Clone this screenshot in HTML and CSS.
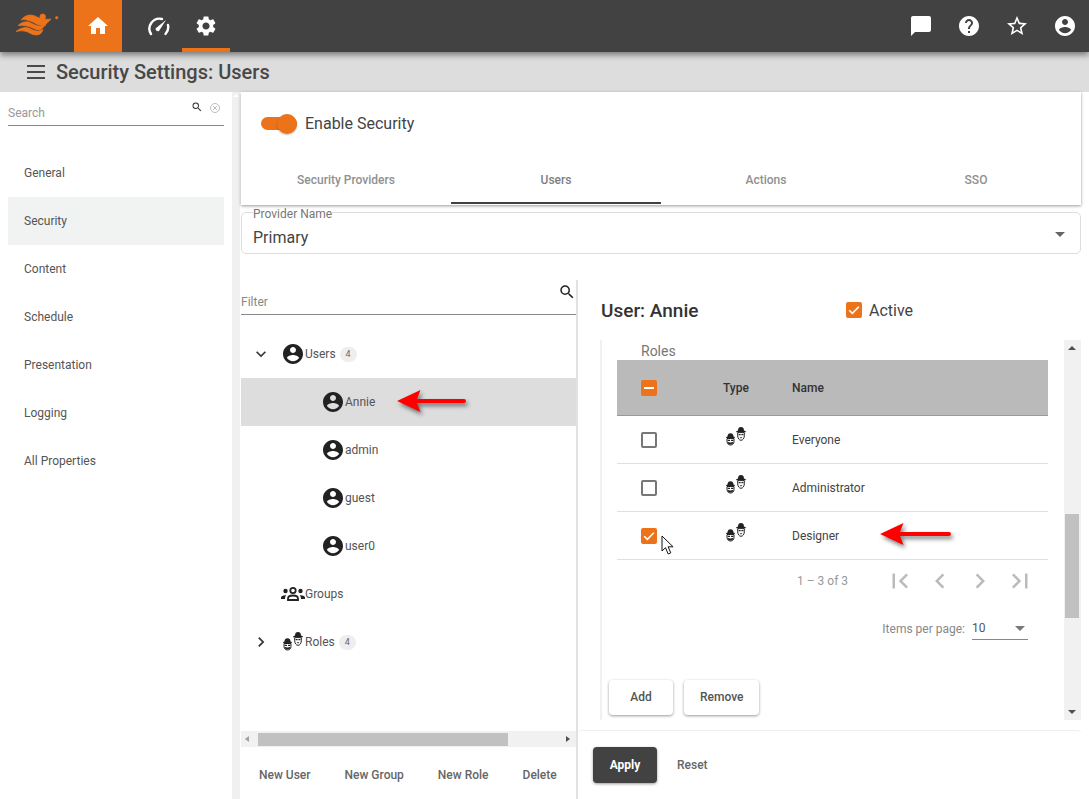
FILE: index.html
```html
<!DOCTYPE html>
<html lang="en">
<head>
  <meta charset="UTF-8" />
  <meta name="viewport" content="width=device-width, initial-scale=1.0" />
  <title>Security Settings: Users</title>
  <link rel="stylesheet" href="styles.css">
</head>
<body>
  <svg class="sprite" aria-hidden="true">
    <symbol id="i-user" viewBox="0 0 24 24"><path d="M12 2C6.48 2 2 6.48 2 12s4.48 10 10 10 10-4.48 10-10S17.52 2 12 2zm0 3c1.66 0 3 1.34 3 3s-1.34 3-3 3-3-1.34-3-3 1.34-3 3-3zm0 14.2c-2.5 0-4.71-1.28-6-3.22.03-1.99 4-3.08 6-3.08 1.99 0 5.97 1.09 6 3.08-1.29 1.94-3.5 3.22-6 3.22z"/></symbol>
    <symbol id="i-roles" viewBox="0 0 24 24">
      <!-- back figure -->
      <path d="M14 5.600C14 3 15.200 2 17 2s3 1 3 3.600l1.800.6v1H12.200v-1z" fill="#222"/>
      <path d="M13.700 7.600h6.600v3.200c0 2.500-1.500 4.500-3.300 4.500s-3.300-2-3.300-4.500z" fill="#fff" stroke="#222" stroke-width="1"/>
      <path d="M14.600 9h2v1.300h-2zM17.400 9h2v1.300h-2z" fill="#222"/>
      <path d="M15.500 12.300h3l-1.500 1.300z" fill="#222"/>
      <!-- front figure -->
      <path d="M3.500 11.500C3.500 9.300 4.700 8.300 6.500 8.300s3 1 3 3.200l1.300.5v.9H2.200V12z" fill="#222"/>
      <path d="M3 13.500h7v2.800c0 2.300-1.600 3.700-3.500 3.700S3 18.600 3 16.300z" fill="#fff" stroke="#222" stroke-width="1"/>
      <path d="M3.700 14.700h2.300v1.200H3.700zM7 14.700h2.300v1.200H7z" fill="#222"/>
      <path d="M3.600 16.800c1.800.9 4 .9 5.800 0 0 1.700-1.300 2.700-2.900 2.700s-2.900-1-2.900-2.700z" fill="#222"/>
    </symbol>
    <symbol id="i-first" viewBox="0 0 24 24"><path d="M18.410 16.590L13.820 12l4.590-4.590L17 6l-6 6 6 6zM6 6h2v12H6z"/></symbol>
    <symbol id="i-prev" viewBox="0 0 24 24"><path d="M15.410 7.410L14 6l-6 6 6 6 1.410-1.410L10.830 12z"/></symbol>
    <symbol id="i-next" viewBox="0 0 24 24"><path d="M10 6L8.590 7.410 13.170 12l-4.580 4.590L10 18l6-6z"/></symbol>
    <symbol id="i-last" viewBox="0 0 24 24"><path d="M5.590 7.410L10.180 12l-4.590 4.590L7 18l6-6-6-6zM16 6h2v12h-2z"/></symbol>
    <symbol id="i-search" viewBox="0 0 24 24"><path d="M15.500 14h-.79l-.28-.27A6.470 6.470 0 0 0 16 9.500 6.500 6.500 0 1 0 9.500 16c1.610 0 3.090-.59 4.230-1.570l.27.28v.79l5 4.990L20.490 19l-4.990-5zm-6 0C7.010 14 5 11.990 5 9.500S7.010 5 9.500 5 14 7.010 14 9.500 11.990 14 9.500 14z"/></symbol>
  </svg>

  <header class="topbar">
    <div class="logo">
      <svg width="46" height="26" viewBox="0 0 46 26" fill="#ec7319" stroke="#ec7319" stroke-width="0.700">
        <path d="M7 8C11 3 16 2 21 4c4 2 8 4 16 3-2 3-5 4-6 7-7 0-11-4-15-5-3-1-6-2-9-1z"/>
        <path d="M4 13.500C9 9 14 9 18 11.500c4 2 8 3.500 12 2-1 3-3 4.500-5 4.500-4 0-8-3.500-12-4-3-.5-6-.5-9-.5z"/>
        <path d="M2 19.500c5-4 10-5 14-3 4 2 8 4 13 1-1 3.500-3 5.500-7 5.500-5 0-8-4-12-4-3-.5-5 0-8 .5z"/>
        <circle cx="28.700" cy="4.700" r="2.800"/>
        <circle cx="42.700" cy="5.700" r="1.200"/>
      </svg>
    </div>
    <a class="nav-tile nav-home">
      <svg width="24" height="24" viewBox="0 0 24 24" fill="#fff"><path d="M10 20v-6h4v6h5v-8h3L12 3 2 12h3v8z"/></svg>
    </a>
    <a class="nav-tile nav-gauge">
      <svg width="24" height="24" viewBox="0 0 24 24" fill="none" stroke="#fff" stroke-width="2.400" stroke-linecap="round">
        <path d="M5 20A10 10 0 0 1 16 5"/>
        <path d="M22 11a10 10 0 0 1-2.500 9"/>
        <path d="M9.500 14.500L20 6l-7 11a2.500 2.500 0 0 1-3.500-2.500z" fill="#fff" stroke="none"/>
      </svg>
    </a>
    <a class="nav-tile nav-active">
      <svg width="24" height="24" viewBox="0 0 24 24" fill="#fff"><path d="M19.140 12.940c.04-.3.06-.61.06-.94 0-.32-.02-.64-.07-.94l2.030-1.580c.18-.14.23-.41.12-.61l-1.920-3.320c-.12-.22-.37-.29-.59-.22l-2.390.96c-.5-.38-1.030-.7-1.620-.94l-.36-2.540c-.04-.24-.24-.41-.48-.41h-3.840c-.24 0-.43.17-.47.41l-.36 2.540c-.59.24-1.130.57-1.620.94l-2.390-.96c-.22-.08-.47 0-.59.22L2.740 8.870c-.12.21-.08.47.12.61l2.030 1.580c-.05.3-.09.63-.09.94s.02.64.07.94l-2.030 1.580c-.18.14-.23.41-.12.61l1.920 3.320c.12.22.37.29.59.22l2.390-.96c.5.38 1.030.7 1.620.94l.36 2.540c.05.24.24.41.48.41h3.840c.24 0 .44-.17.47-.41l.36-2.540c.59-.24 1.130-.56 1.620-.94l2.390.96c.22.08.47 0 .59-.22l1.920-3.320c.12-.22.07-.47-.12-.61l-2.010-1.580zM12 15.600c-1.980 0-3.600-1.620-3.600-3.600s1.620-3.600 3.600-3.600 3.600 1.620 3.600 3.600-1.620 3.600-3.600 3.600z"/></svg>
    </a>
    <div class="top-right">
      <a class="nav-tile"><svg width="24" height="24" viewBox="0 0 24 24" fill="#fff"><path d="M20 2H4c-1.100 0-2 .9-2 2v18l4-4h14c1.100 0 2-.9 2-2V4c0-1.100-.9-2-2-2z"/></svg></a>
      <a class="nav-tile"><svg width="24" height="24" viewBox="0 0 24 24" fill="#fff"><path d="M12 2C6.480 2 2 6.480 2 12s4.480 10 10 10 10-4.480 10-10S17.520 2 12 2zm1 17h-2v-2h2v2zm2.070-7.750l-.9.920C13.450 12.900 13 13.500 13 15h-2v-.5c0-1.100.45-2.100 1.170-2.830l1.240-1.260c.37-.36.59-.86.59-1.410 0-1.100-.9-2-2-2s-2 .9-2 2H8c0-2.210 1.790-4 4-4s4 1.790 4 4c0 .88-.36 1.680-.93 2.250z"/></svg></a>
      <a class="nav-tile"><svg width="24" height="24" viewBox="0 0 24 24" fill="#fff"><path d="M22 9.240l-7.190-.62L12 2 9.190 8.630 2 9.240l5.460 4.730L5.820 21 12 17.270 18.180 21l-1.630-7.030L22 9.240zM12 15.400l-3.760 2.270 1-4.280-3.320-2.880 4.380-.38L12 6.100l1.710 4.040 4.380.38-3.320 2.880 1 4.280L12 15.400z"/></svg></a>
      <a class="nav-tile"><svg width="24" height="24" fill="#fff"><use href="#i-user"/></svg></a>
    </div>
  </header>

  <div class="subbar">
    <div class="hamburger"><span></span><span></span><span></span></div>
    <h1>Security Settings: Users</h1>
  </div>

  <div class="content">
    <aside class="sidebar">
      <div class="side-search">
        <span>Search</span>
        <svg class="s-mag" width="12" height="12"><use href="#i-search"/></svg>
        <svg class="s-clear" width="12" height="12" viewBox="0 0 24 24" fill="none" stroke="#bbb" stroke-width="2"><circle cx="12" cy="12" r="9"/><path d="M8 8l8 8M16 8l-8 8"/></svg>
      </div>
      <nav class="side-nav">
        <a>General</a>
        <a class="current">Security</a>
        <a>Content</a>
        <a>Schedule</a>
        <a>Presentation</a>
        <a>Logging</a>
        <a>All Properties</a>
      </nav>
    </aside>
    <div class="side-strip"><b></b></div>

    <main class="main">
      <section class="card">
        <div class="toggle-row">
          <span class="toggle"><i></i></span>
          <span>Enable Security</span>
        </div>
        <div class="tabs">
          <a>Security Providers</a>
          <a class="on">Users</a>
          <a>Actions</a>
          <a>SSO</a>
        </div>
      </section>

      <fieldset class="provider">
        <legend>Provider Name</legend>
        <span>Primary</span>
        <b class="caret"></b>
      </fieldset>

      <div class="split">
        <section class="left">
          <div class="filter">
            <span>Filter</span>
            <svg width="18" height="18" fill="#222"><use href="#i-search"/></svg>
          </div>
          <div class="tree">
            <div class="tree-row">
              <span class="chev"><svg width="20" height="20" viewBox="0 0 24 24" fill="#333"><path d="M16.590 8.590L12 13.170 7.410 8.590 6 10l6 6 6-6z"/></svg></span>
              <svg class="t-icon" width="24" height="24"><use href="#i-user"/></svg>
              <span>Users</span><em class="count">4</em>
            </div>
            <div class="tree-row child selected">
              <svg class="t-icon" width="24" height="24"><use href="#i-user"/></svg>
              <span>Annie</span>
              <svg class="arrow" width="72" height="26" viewBox="0 0 72 26"><path d="M1 12L24.500 1 21 10h47a2 2 0 0 1 0 4H21l3.500 9z"/></svg>
            </div>
            <div class="tree-row child">
              <svg class="t-icon" width="24" height="24"><use href="#i-user"/></svg>
              <span>admin</span>
            </div>
            <div class="tree-row child">
              <svg class="t-icon" width="24" height="24"><use href="#i-user"/></svg>
              <span>guest</span>
            </div>
            <div class="tree-row child">
              <svg class="t-icon" width="24" height="24"><use href="#i-user"/></svg>
              <span>user0</span>
            </div>
            <div class="tree-row">
              <span class="chev"></span>
              <svg class="t-icon" width="24" height="24" viewBox="0 0 24 24">
                <circle cx="12" cy="8.500" r="2.700" fill="none" stroke="currentColor" stroke-width="1.800"/>
                <circle cx="4.500" cy="9" r="2.200"/><circle cx="19.500" cy="9" r="2.200"/>
                <path d="M7 18v-1.500c0-2 2.500-3 5-3s5 1 5 3V18z" fill="none" stroke="currentColor" stroke-width="1.800"/>
                <path d="M0 17v-1.500c0-1.500 2-2.500 5.300-2.300-.8 1-1.300 2-1.300 3.800zM24 17v-1.500c0-1.500-2-2.500-5.300-2.300.8 1 1.300 2 1.300 3.800z"/>
              </svg>
              <span>Groups</span>
            </div>
            <div class="tree-row">
              <span class="chev"><svg width="20" height="20" viewBox="0 0 24 24" fill="#333"><path d="M10 6L8.590 7.410 13.170 12l-4.580 4.590L10 18l6-6z"/></svg></span>
              <svg class="t-icon" width="24" height="24"><use href="#i-roles"/></svg>
              <span>Roles</span><em class="count">4</em>
            </div>
          </div>
          <div class="hscroll">
            <b class="tri-l"></b>
            <div class="h-thumb"></div>
            <b class="tri-r"></b>
          </div>
          <div class="left-actions">
            <a>New User</a>
            <a>New Group</a>
            <a>New Role</a>
            <a>Delete</a>
          </div>
        </section>

        <section class="right">
          <div class="user-head">
            <h2>User: Annie</h2>
            <label class="active-check">
              <span class="check checked"><svg width="16" height="16" viewBox="0 0 16 16" fill="none" stroke="#fff" stroke-width="1.600"><path d="M3.200 8.200l3.200 3.200 6.400-6.600"/></svg></span>
              Active
            </label>
          </div>

          <div class="scroller">
            <div class="scroll-body">
              <div class="roles-label">Roles</div>
              <table class="roles">
                <thead>
                  <tr>
                    <th class="c-check"><span class="check checked"><i class="dash"></i></span></th>
                    <th class="c-type">Type</th>
                    <th>Name</th>
                  </tr>
                </thead>
                <tbody>
                  <tr>
                    <td class="c-check"><span class="check"></span></td>
                    <td class="c-type"><svg width="24" height="24"><use href="#i-roles"/></svg></td>
                    <td>Everyone</td>
                  </tr>
                  <tr>
                    <td class="c-check"><span class="check"></span></td>
                    <td class="c-type"><svg width="24" height="24"><use href="#i-roles"/></svg></td>
                    <td>Administrator</td>
                  </tr>
                  <tr>
                    <td class="c-check">
                      <span class="check checked"><svg width="16" height="16" viewBox="0 0 16 16" fill="none" stroke="#fff" stroke-width="1.600"><path d="M3.200 8.200l3.200 3.200 6.400-6.600"/></svg></span>
                      <svg class="pointer" width="14" height="21" viewBox="0 0 14 21"><path d="M1 1v15l3.500-3.300 2.700 6.300 2.600-1.100-2.700-6.100h5z" fill="#fff" stroke="#111" stroke-width="1"/></svg>
                    </td>
                    <td class="c-type"><svg width="24" height="24"><use href="#i-roles"/></svg></td>
                    <td class="c-name">Designer
                      <svg class="arrow" width="74" height="26" viewBox="0 0 74 26"><path d="M1 12L24.500 1 21 10h49a2 2 0 0 1 0 4H21l3.500 9z"/></svg>
                    </td>
                  </tr>
                </tbody>
              </table>
              <div class="range-row">
                <span class="range">1 – 3 of 3</span>
                <div class="pager">
                  <svg width="30" height="30"><use href="#i-first"/></svg>
                  <svg width="30" height="30"><use href="#i-prev"/></svg>
                  <svg width="30" height="30"><use href="#i-next"/></svg>
                  <svg width="30" height="30"><use href="#i-last"/></svg>
                </div>
              </div>
              <div class="per-page">
                <span>Items per page:</span>
                <div class="page-select"><span>10</span><b class="caret small"></b></div>
              </div>
              <div class="role-buttons">
                <button>Add</button>
                <button>Remove</button>
              </div>
            </div>
            <div class="vscroll">
              <b class="tri-u"></b>
              <div class="v-thumb"></div>
              <b class="tri-d"></b>
            </div>
          </div>

          <div class="footer">
            <button class="apply">Apply</button>
            <a>Reset</a>
          </div>
        </section>
      </div>
    </main>
  </div>
</body>
</html>
```

FILE: styles.css
```css
* {
  box-sizing: border-box;
}
html, body {
  margin: 0;
  height: 799px;
  overflow: hidden;
}
body {
  font-family: Roboto, sans-serif;
  font-size: 12px;
  color: #444;
  background: #fff;
  display: flex;
  flex-direction: column;
}
.sprite {
  display: none;
}
svg {
  display: block;
  flex: none;
}
em {
  font-style: normal;
}

/* top bar */
.topbar {
  height: 52px;
  flex: none;
  background: #424242;
  display: flex;
  position: relative;
  z-index: 3;
  box-shadow: 0 3px 6px rgba(0, 0, 0, 0.45);
}
.logo {
  width: 74px;
  padding: 12px 0 0 14px;
}
.nav-tile {
  width: 48px;
  height: 52px;
  display: flex;
  align-items: center;
  justify-content: center;
}
.nav-home {
  background: #ec7319;
}
.nav-gauge {
  margin-left: 12px;
}
.nav-active {
  border-bottom: 4px solid #ec7319;
  padding-top: 4px;
}
.top-right {
  margin-left: auto;
  display: flex;
}

.subbar {
  height: 40px;
  flex: none;
  background: #dddddd;
  display: flex;
  align-items: center;
  padding-left: 27px;
  gap: 11px;
}
.hamburger {
  width: 18px;
  display: flex;
  flex-direction: column;
  gap: 4px;
}
.hamburger span {
  height: 2px;
  background: #4a4a4a;
}
.subbar h1 {
  margin: 0;
  font-size: 20px;
  font-weight: 500;
  color: #484848;
}

/* sidebar */
.content {
  flex: 1;
  display: flex;
  min-height: 0;
}
.sidebar {
  width: 232px;
  flex: none;
  padding: 0 8px;
}
.side-strip {
  width: 8px;
  flex: none;
  background: #f0f0f0;
  padding: 2px 0 0 1px;
}
.side-strip b {
  display: block;
  width: 0;
  border-left: 3px solid transparent;
  border-right: 3px solid transparent;
  border-bottom: 3px solid #fff;
}
.side-search {
  height: 34px;
  position: relative;
  border-bottom: 1px solid #888;
  display: flex;
  align-items: flex-end;
  padding-bottom: 5px;
  color: #999;
}
.s-mag {
  position: absolute;
  right: 21px;
  top: 9px;
  fill: #333;
}
.s-clear {
  position: absolute;
  right: 3px;
  top: 10px;
}
.side-nav {
  margin-top: 23px;
}
.side-nav a {
  display: flex;
  align-items: center;
  height: 48px;
  padding-left: 16px;
  color: #555;
}
.side-nav a.current {
  background: #f1f2f2;
}

/* main column */
.main {
  width: 840px;
  margin-left: 1px;
  flex: none;
  display: flex;
  flex-direction: column;
  min-height: 0;
}
.card {
  height: 113px;
  flex: none;
  background: #fff;
  box-shadow: 0 1px 3px rgba(0, 0, 0, 0.4);
  position: relative;
}
.toggle-row {
  height: 63px;
  margin-bottom: 1px;
  display: flex;
  align-items: center;
  padding-left: 20px;
  gap: 8px;
  font-size: 16px;
  color: #444;
}
.toggle {
  width: 36px;
  height: 13px;
  border-radius: 7px;
  background: #ec7319;
  display: block;
  position: relative;
}
.toggle i {
  position: absolute;
  right: 0;
  top: -3px;
  width: 20px;
  height: 20px;
  border-radius: 50%;
  background: #ec7319;
  box-shadow: 0 1px 2px rgba(0, 0, 0, 0.25);
}
.tabs {
  display: grid;
  grid-template-columns: repeat(4, 210px);
  height: 48px;
}
.tabs a {
  display: flex;
  align-items: center;
  justify-content: center;
  font-weight: 500;
  color: #909090;
}
.tabs a.on {
  color: #808080;
  box-shadow: inset 0 -2px 0 #424242;
}

.provider {
  height: 48px;
  flex: none;
  margin: 1px 0 0;
  padding: 0 11px;
  border: 1px solid #ddd;
  border-radius: 5px;
  font-size: 16px;
  color: #444;
  position: relative;
  display: block;
  min-width: 0;
}
.provider legend {
  font-size: 12px;
  line-height: 12px;
  color: #777;
  padding: 0;
  position: relative;
  top: 2px;
}
.provider > span {
  display: block;
  line-height: 20px;
  margin-top: 10px;
}
.caret {
  display: block;
  border-left: 5px solid transparent;
  border-right: 5px solid transparent;
  border-top: 5px solid #666;
}
.provider .caret {
  position: absolute;
  right: 15px;
  top: 14px;
}

.split {
  flex: 1;
  min-height: 0;
  display: flex;
  margin-top: 26px;
}

/* tree side */
.left {
  width: 335px;
  flex: none;
  display: flex;
  flex-direction: column;
}
.filter {
  height: 35px;
  flex: none;
  display: flex;
  align-items: flex-end;
  justify-content: space-between;
  border-bottom: 1px solid #888;
  padding-bottom: 5px;
  color: #888;
  position: relative;
}
.filter svg {
  position: absolute;
  right: 0;
  top: 3px;
}
.tree {
  flex: 1;
  padding-top: 15px;
}
.tree-row {
  height: 48px;
  display: flex;
  align-items: center;
  position: relative;
  color: #555;
}
.tree-row.child {
  padding-left: 80px;
}
.tree-row.selected {
  background: #dddddd;
}
.chev {
  width: 40px;
  display: flex;
  justify-content: center;
}
.t-icon {
  fill: #222;
  color: #222;
}
.count {
  margin-left: 4px;
  width: 17px;
  height: 15px;
  line-height: 15px;
  border-radius: 8px;
  background: #eeeeee;
  text-align: center;
  font-size: 9px;
  color: #666;
}
.arrow {
  position: absolute;
  fill: #f00;
  filter: drop-shadow(2px 3px 2px rgba(0, 0, 0, 0.5));
  overflow: visible;
}
.tree-row .arrow {
  left: 155px;
  top: 11px;
}
.hscroll {
  height: 16px;
  flex: none;
  background: #f1f1f1;
  display: flex;
  align-items: center;
  position: relative;
  padding-left: 17px;
}
.h-thumb {
  width: 250px;
  height: 13px;
  background: #c1c1c1;
}
.tri-l, .tri-r {
  position: absolute;
  top: 5px;
  border-top: 3.500px solid transparent;
  border-bottom: 3.500px solid transparent;
}
.tri-l {
  left: 4px;
  border-right: 4px solid #a0a0a0;
}
.tri-r {
  right: 6px;
  border-left: 4px solid #505050;
}
.left-actions {
  height: 52px;
  flex: none;
  display: flex;
  align-items: center;
  padding: 4px 0 0 18px;
  gap: 34px;
  color: #666;
  font-weight: 500;
}

/* user detail side */
.right {
  flex: 1;
  min-width: 0;
  display: flex;
  flex-direction: column;
  border-left: 2px solid #e2e2e2;
}
.user-head {
  height: 60px;
  flex: none;
  display: flex;
  align-items: center;
  padding-left: 23px;
}
.user-head h2 {
  margin: 0;
  width: 245px;
  font-size: 19px;
  font-weight: 500;
  color: #333;
}
.active-check {
  display: flex;
  align-items: center;
  gap: 7px;
  font-size: 16px;
  color: #444;
}
.check {
  width: 16px;
  height: 16px;
  display: flex;
  align-items: center;
  justify-content: center;
  border: 2px solid #777;
  border-radius: 2px;
}
.check.checked {
  background: #ec7319;
  border: none;
}
.dash {
  display: block;
  height: 2px;
  width: 10px;
  background: #fff;
}
.scroller {
  height: 380px;
  flex: none;
  margin-left: 22px;
  border-left: 2px solid #f1f1f1;
  display: flex;
}
.scroll-body {
  flex: 1;
  min-width: 0;
  padding-left: 15px;
  position: relative;
}
.roles-label {
  height: 20px;
  padding: 4px 0 0 24px;
  font-size: 14px;
  line-height: 14px;
  color: #777;
}
.roles {
  width: 431px;
  border-collapse: collapse;
  table-layout: fixed;
  color: #444;
}
.roles th {
  height: 55px;
  background: #bababa;
  text-align: left;
  font-weight: 500;
  color: #333;
  border-bottom: 1px solid #999;
  padding: 1px 0 0;
}
.roles td {
  height: 48px;
  border-bottom: 1px solid #e0e0e0;
  padding: 1px 0 0;
}
.c-check {
  width: 106px;
  padding-left: 24px !important;
  position: relative;
}
.c-type {
  width: 69px;
}
.c-type svg {
  margin: -6px 0 0 1px;
}
.c-name {
  position: relative;
}
.c-name .arrow {
  left: 87px;
  top: 10px;
}
.pointer {
  position: absolute;
  left: 44px;
  top: 23px;
}
.range-row {
  height: 42px;
  display: flex;
  align-items: center;
  width: 431px;
}
.range {
  margin-left: 180px;
  color: #999;
}
.pager {
  margin-left: 37px;
  display: flex;
  gap: 10px;
  fill: #bbb;
}
.per-page {
  display: flex;
  align-items: center;
  width: 411px;
  justify-content: flex-end;
  gap: 7px;
  height: 38px;
  margin-top: 8px;
  color: #888;
}
.page-select {
  width: 56px;
  height: 23px;
  border-bottom: 1px solid #888;
  display: flex;
  align-items: center;
  justify-content: space-between;
  padding: 0 3px 0 0;
  color: #555;
}
.caret.small {
  border-top-color: #777;
}
.role-buttons {
  display: flex;
  gap: 11px;
  margin: 32px 0 0 -8px;
}
.role-buttons button {
  height: 35px;
  padding: 0 16px;
  min-width: 64px;
  font: 500 12px Roboto, sans-serif;
  color: #555;
  border: none;
  border-radius: 4px;
  background: #fff;
  box-shadow: 0 1px 3px rgba(0, 0, 0, 0.4);
}
.vscroll {
  width: 17px;
  flex: none;
  background: #f1f1f1;
  position: relative;
  padding: 174px 2px 0 1px;
}
.v-thumb {
  height: 104px;
  background: #c1c1c1;
}
.tri-u, .tri-d {
  position: absolute;
  left: 4px;
  border-left: 4px solid transparent;
  border-right: 4px solid transparent;
}
.tri-u {
  top: 6px;
  border-bottom: 4px solid #505050;
}
.tri-d {
  bottom: 6px;
  border-top: 4px solid #505050;
}
.footer {
  margin-top: 10px;
  flex: 1;
  border-top: 1px solid #eeeeee;
  border-radius: 4px 4px 0 0;
  display: flex;
  align-items: flex-start;
  padding: 16px 0 0 15px;
  gap: 20px;
  color: #666;
  font-weight: 500;
}
.footer a {
  line-height: 36px;
}
.apply {
  width: 64px;
  height: 36px;
  background: #424242;
  color: #fff;
  border: none;
  border-radius: 4px;
  font: 700 12px Roboto, sans-serif;
  box-shadow: 0 1px 3px rgba(0, 0, 0, 0.4);
}
```
